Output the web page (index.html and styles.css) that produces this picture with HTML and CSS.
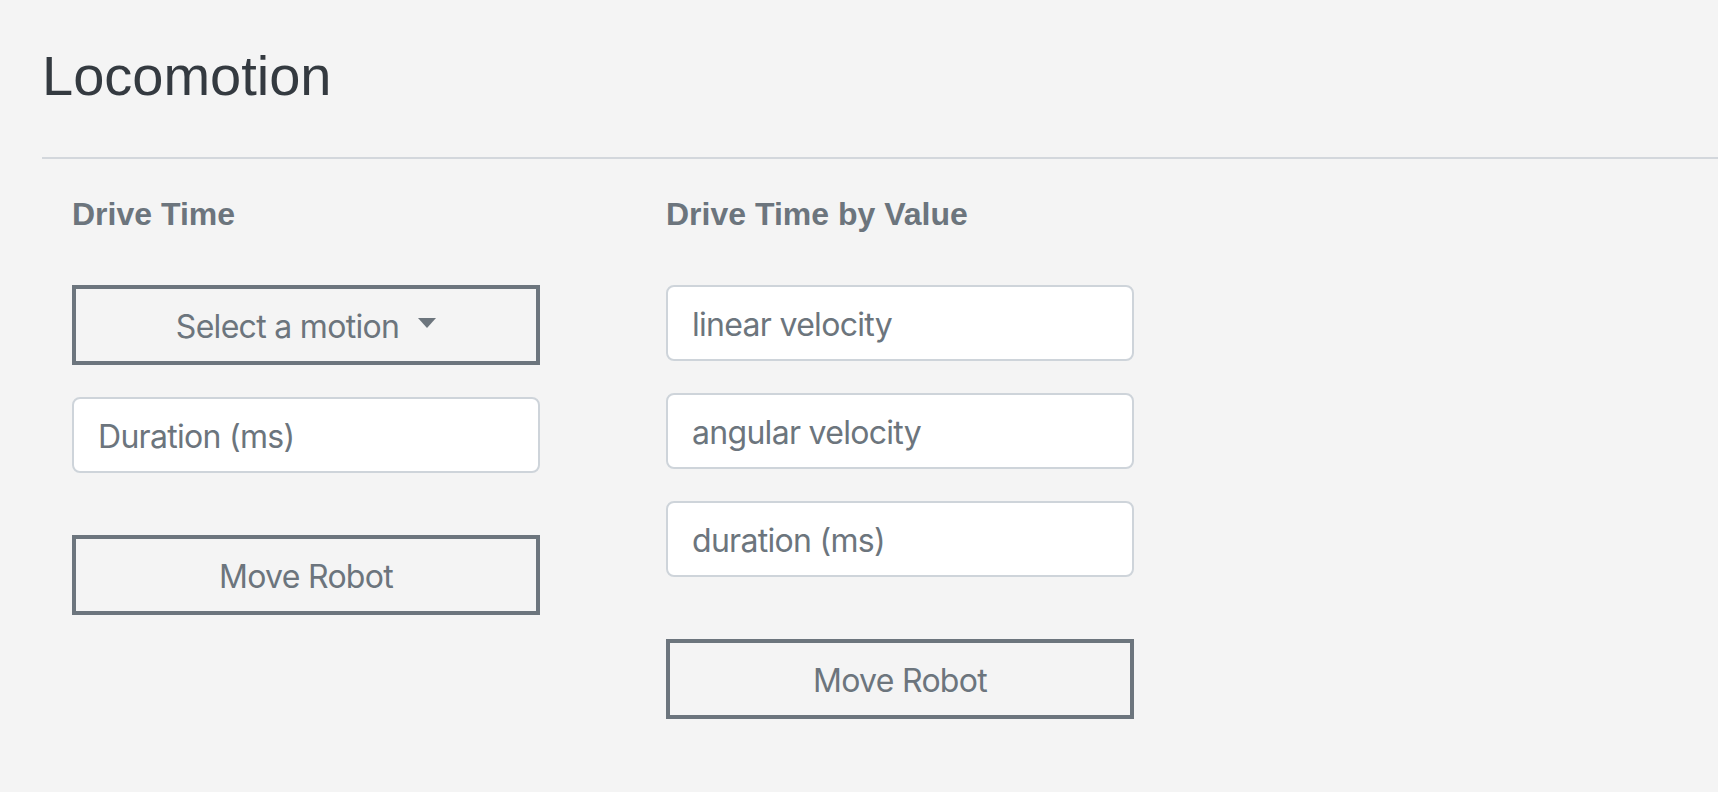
FILE: index.html
```html
<!DOCTYPE html>
<html lang="en">
<head>
<meta charset="utf-8">
<title>Locomotion</title>
<link rel="stylesheet" href="styles.css">
</head>
<body>
<main class="page">
  <h1 class="title">Locomotion</h1>
  <hr class="rule">
  <div class="columns">
    <section class="panel">
      <h5 class="panel-title">Drive Time</h5>
      <div class="controls">
        <button class="btn btn-select" type="button">Select a motion<span class="caret"></span></button>
        <input class="field" type="text" placeholder="Duration (ms)">
        <button class="btn btn-submit" type="button">Move Robot</button>
      </div>
    </section>
    <section class="panel">
      <h5 class="panel-title">Drive Time by Value</h5>
      <div class="controls">
        <input class="field" type="text" placeholder="linear velocity">
        <input class="field" type="text" placeholder="angular velocity">
        <input class="field" type="text" placeholder="duration (ms)">
        <button class="btn btn-submit" type="button">Move Robot</button>
      </div>
    </section>
  </div>
</main>
</body>
</html>
```

FILE: styles.css
```css
html, body {
  margin: 0;
  padding: 0;
  background: #f4f4f4;
}

body {
  font-family: "Inter", "Liberation Sans", sans-serif;
  color: #6c757d;
}

.page {
  padding: 42px 0 0 42px;
}

.title {
  margin: 0;
  font-family: "Liberation Sans", Arial, sans-serif;
  font-weight: 400;
  font-size: 56px;
  line-height: 67px;
  color: #343a40;
}

.rule {
  margin: 48px 0 0 0;
  border: 0;
  border-top: 2px solid #d3d7dc;
  height: 0;
}

.columns {
  display: flex;
  gap: 126px;
  padding: 36px 0 0 30px;
}

.panel {
  width: 468px;
  display: flex;
  flex-direction: column;
}

.panel-title {
  margin: 0;
  font-family: "Liberation Sans", Arial, sans-serif;
  font-weight: 700;
  font-size: 32px;
  line-height: 38px;
  color: #6c757d;
}

.controls {
  margin-top: 52px;
  display: flex;
  flex-direction: column;
  gap: 32px;
}

.btn {
  box-sizing: border-box;
  width: 468px;
  height: 80px;
  margin: 0;
  padding: 3px 24px 0 24px;
  border: 4px solid #6c757d;
  border-radius: 0;
  background: transparent;
  color: #6c757d;
  font-family: "Inter", "Liberation Sans", sans-serif;
  font-size: 32px;
  letter-spacing: -0.7px;
  line-height: 48px;
  display: flex;
  align-items: center;
  justify-content: center;
}

.caret {
  display: inline-block;
  width: 0;
  height: 0;
  margin-left: 19px;
  margin-top: -7px;
  border-top: 10px solid #6c757d;
  border-left: 9px solid transparent;
  border-right: 9px solid transparent;
}

.btn-submit {
  margin-top: 30px;
}

.field {
  box-sizing: border-box;
  width: 468px;
  height: 76px;
  margin: 0;
  padding: 2px 24px 0 24px;
  border: 2px solid #ced4da;
  border-radius: 8px;
  background: #ffffff;
  color: #495057;
  font-family: "Inter", "Liberation Sans", sans-serif;
  font-size: 32px;
  letter-spacing: -0.7px;
  outline: none;
}

.field::placeholder {
  color: #6c757d;
  opacity: 1;
}
```
